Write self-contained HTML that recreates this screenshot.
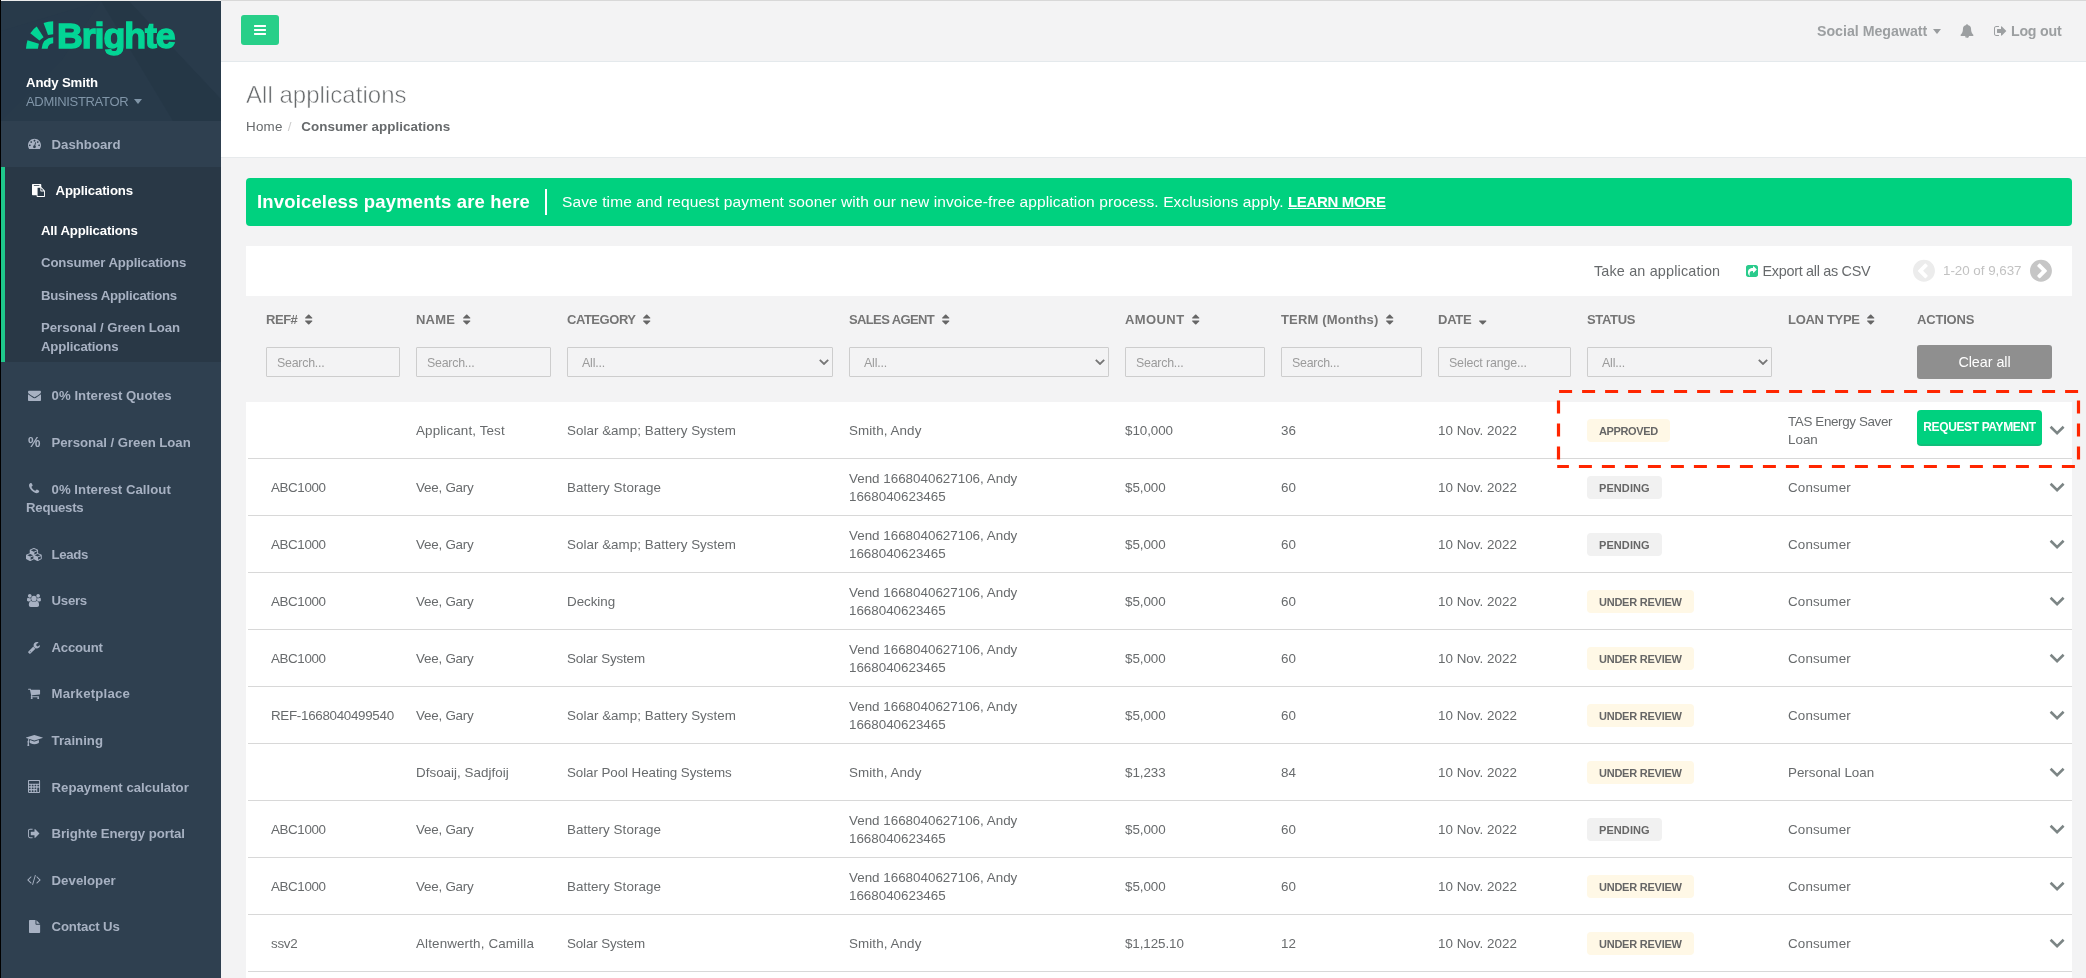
<!DOCTYPE html>
<html lang="en">
<head>
<meta charset="utf-8">
<title>Brighte - All applications</title>
<style>
*{box-sizing:border-box}
html,body{margin:0;padding:0}
body{width:2086px;height:978px;overflow:hidden;position:relative;background:#f3f3f4;will-change:transform;
 font-family:"Liberation Sans",sans-serif;font-size:13.4px;line-height:18.57px;color:#676a6c}
svg.fa{display:inline-block;fill:currentColor;vertical-align:-1.86px;overflow:visible}
svg.sorti{vertical-align:-2.7px}
.fw{display:inline-block;width:16.7px;text-align:center}
.pct{font-size:14px;line-height:14px}
a{color:inherit;text-decoration:none}
/* screenshot frame */
#edge-l{position:absolute;left:0;top:0;width:1px;height:978px;background:#000;z-index:50}
#edge-t{position:absolute;left:1px;top:0;width:2085px;height:1px;background:#d8d8d8;z-index:50}
#edge-t i{display:block;width:220px;height:1px;background:#ececec}
/* sidebar */
#sidebar{position:absolute;left:1px;top:1px;width:220px;height:977px;background:#2f4050;color:#a7b1c2;overflow:hidden}
#sidebar .hdr{height:119.5px;background:#283a4a;position:relative;overflow:hidden}
#sidebar .hdr .pat{position:absolute;left:0;top:0;width:220px;height:120px}
.logo{position:absolute;left:25px;top:20px;height:40px;white-space:nowrap;color:#03d595}
.logo svg{position:absolute;left:0;top:0;width:28px;height:28px}
.logo b{position:absolute;left:31px;top:-7.3px;font-size:35.8px;line-height:44px;letter-spacing:-1.1px;font-weight:700;-webkit-text-stroke:1.4px #03d595}
.uname{position:absolute;left:25px;top:73px;color:#fff;font-weight:700;font-size:13.2px}
.urole{position:absolute;left:25px;top:91.5px;color:#8095a8;font-size:13px}
.urole .car{display:inline-block;margin-left:6px;border-left:4px solid transparent;border-right:4px solid transparent;border-top:5px solid #8095a8;vertical-align:2px}
ul{list-style:none;margin:0;padding:0}
.nav>li>a{display:block;padding:15px 20px 13px 25px;font-weight:700;font-size:13.2px;min-height:46.57px}
.nav>li>a .fw{margin-right:5.2px}
.nav>li.active{background:#293846;border-left:4px solid #1fc98c;color:#fff}
.nav>li.active>a{color:#fff}
.nav2>li>a{display:block;padding:8px 10px 6px 36px;font-weight:700;font-size:13.2px;color:#a7b1c2}
.nav2>li.cur>a{color:#fff}
.nav2>li:last-child{margin-bottom:10px}
/* top nav */
#topnav{position:absolute;left:221px;top:1px;width:1865px;height:61px;border-bottom:1px solid #e4e9ec;background:#f3f3f4}
.burger{position:absolute;left:20px;top:14px;width:38px;height:30px;border-radius:3px;background:#28cf89;color:#fff;text-align:center;line-height:30px}
.burger svg{vertical-align:-3px}
.tr{position:absolute;top:0;height:60px;line-height:60px;font-size:14.2px;font-weight:700;color:#9c9fa1;white-space:nowrap}
.tr .car{display:inline-block;margin-left:6px;border-left:4px solid transparent;border-right:4px solid transparent;border-top:5px solid #999c9e;vertical-align:2px}
/* heading */
#heading{position:absolute;left:221px;top:62px;width:1865px;height:96px;background:#fff;border-bottom:1px solid #e7eaec}
#heading h2{position:absolute;left:25px;top:17px;margin:0;font-size:24px;line-height:32px;font-weight:400;color:#676a6c;-webkit-text-stroke:.55px #fff;white-space:nowrap}
.crumb{position:absolute;left:25px;top:56px;white-space:nowrap}
.crumb .sep{color:#ccc;padding:0 6px 0 5px}
.crumb b{font-weight:700}
/* banner */
#banner{position:absolute;left:246px;top:178px;width:1826px;height:48px;border-radius:4px;background:#00d17f;color:#fff;white-space:nowrap}
#banner .h{position:absolute;left:11px;top:11px;font-size:18.5px;line-height:25px;font-weight:700}
#banner .div{position:absolute;left:299px;top:11px;width:2px;height:26px;background:#fff}
#banner .t{position:absolute;left:316px;top:13px;font-size:15.5px;line-height:21px}
#banner .t b{text-decoration:underline;font-weight:700;font-size:15px}
/* toolbar */
#toolbar{position:absolute;left:246px;top:246px;width:1826px;height:50px;background:#fff;white-space:nowrap;font-size:14.4px;line-height:50px}
#toolbar>span,#toolbar>a{position:absolute;top:0}
#toolbar .share{color:#2acb8c}#toolbar .sp{position:static;display:inline-block;width:4.5px}
#toolbar .pg{color:#c2c2c2;font-size:13.4px}
#toolbar .circ{position:absolute;top:12px}
#toolbar .circ.l{left:1667px;color:#ececec}
#toolbar .circ.r{left:1784px;color:#c6c6c6}
/* table */
#grid{position:absolute;left:246px;top:296px;width:1826px;border-collapse:separate;border-spacing:0;table-layout:fixed}
#grid th{height:40px;padding:14.6px 16px 0 0;text-align:left;vertical-align:top;font-weight:700;font-size:13px;color:#757575;white-space:nowrap}
#grid th:first-child,#grid td:first-child{padding-left:20px}
#grid tr.f td{height:66px;padding:11px 16px 0 0;vertical-align:top;background:transparent;border:0}
#grid tr.f td:first-child{padding-left:20px}
.sorti{margin-left:7.6px;color:#666}
.inp{display:block;width:100%;height:30px;border:1px solid #cdcdcd;border-radius:1px;padding:1.2px 10px 0;font-size:12.4px;line-height:28px;color:#9b9b9b;position:relative;white-space:nowrap}
.sel{padding-left:14px}
.selarrow{position:absolute;right:3px;top:11px;width:10px;height:6px}
.btn-clear{display:block;width:135px;height:34px;margin-top:-2px;border:0;border-radius:3px;background:#8f8f8f;color:#fff;font:400 14.4px/34px "Liberation Sans",sans-serif;text-align:center;padding:0}
#grid tbody td{height:57px;padding:2px 16px 0 0;background:#fff;border-bottom:1px solid #d8d8d8;vertical-align:middle;line-height:17.6px;color:#686b6d}
#grid tbody td.c-ref{padding-left:25px}
#grid tbody tr td:first-child{border-bottom-color:transparent;background:linear-gradient(#d8d8d8,#d8d8d8) no-repeat 2px 100%/100% 1px #fff;background-origin:border-box;background-clip:border-box}
.pill{display:inline-block;height:23px;line-height:23px;padding:0 12px;border-radius:4px;font-size:11px;font-weight:700;color:#666;position:relative;top:-1px;padding-top:1.4px}
.pill.approved,.pill.review{background:#fff8e6}
.pill.pending{background:#f1f1f1}
.c-act{position:relative}
.btn-req{position:absolute;left:0;top:8px;width:125px;height:36px;border:0;border-bottom:2px solid #0fbf7a;border-radius:4px;background:#00d17f;color:#fff;font:700 12px/34px "Liberation Sans",sans-serif;padding:0;text-align:center;white-space:nowrap}
.rowchev{position:absolute;left:132px;top:23px;width:16px;height:11px}
#anno{position:absolute;left:0;top:0;width:2086px;height:978px;z-index:40;pointer-events:none}
</style>
</head>
<body>
<div id="edge-l"></div><div id="edge-t"><i></i></div>

<nav id="sidebar">
 <div class="hdr">
  <svg class="pat" viewBox="0 0 220 120" aria-hidden="true"><polygon points="100,0 128,0 220,98 220,120 172,120" fill="#253746"/><polygon points="128,0 220,0 220,98" fill="#293b4b"/><polygon points="0,30 100,0 60,60 0,120" fill="#27394a"/></svg>
  <div class="logo">
   <svg viewBox="0 0 28 28" aria-hidden="true"><g fill="#03d595">
    <path d="M27.2 0.2 L27.2 13.2 L22 13.9 L17.6 1.9 Q22 0.4 27.2 0.2Z"/>
    <path d="M10.7 5.6 L17.6 16.2 L13.4 19.6 L4.3 12.2 Q7 8.2 10.7 5.6Z"/>
    <path d="M1.5 19.2 L12.9 22.8 L11.9 27.8 L0 27.8 Q0.2 23 1.5 19.2Z"/>
    <path d="M27.2 16.2 L27.2 22.2 Q22.2 22.6 21.6 27.8 L15.6 27.8 Q16.4 17 27.2 16.2Z"/>
   </g></svg>
   <b>Brighte</b>
  </div>
  <div class="uname"><span style="letter-spacing:-0.14px">Andy Smith</span></div>
  <div class="urole"><span style="letter-spacing:-0.32px">ADMINISTRATOR</span><i class="car"></i></div>
 </div>
 <ul class="nav">
  <li><a><span class="fw"><svg class="fa " style="width:13.00px;height:13px;" viewBox="0 -1536 1792 1792" aria-hidden="true"><path transform="scale(1,-1)" d="M384 384C384 313 327 256 256 256C185 256 128 313 128 384C128 455 185 512 256 512C327 512 384 455 384 384ZM576 832C576 761 519 704 448 704C377 704 320 761 320 832C320 903 377 960 448 960C519 960 576 903 576 832ZM1004 351C1069 306 1103 224 1082 143C1055 41 950 -21 847 6C745 33 683 138 710 241C732 322 801 377 880 383L981 765C990 799 1025 820 1059 811C1093 802 1113 767 1105 733ZM1664 384C1664 313 1607 256 1536 256C1465 256 1408 313 1408 384C1408 455 1465 512 1536 512C1607 512 1664 455 1664 384ZM1024 1024C1024 953 967 896 896 896C825 896 768 953 768 1024C768 1095 825 1152 896 1152C967 1152 1024 1095 1024 1024ZM1472 832C1472 761 1415 704 1344 704C1273 704 1216 761 1216 832C1216 903 1273 960 1344 960C1415 960 1472 903 1472 832ZM1792 384C1792 878 1390 1280 896 1280C402 1280 0 878 0 384C0 212 49 45 141 -99C153 -117 173 -128 195 -128H1597C1619 -128 1639 -117 1651 -99C1743 46 1792 212 1792 384Z"/></svg></span> <span style="letter-spacing:0.01px">Dashboard</span></a></li>
  <li class="active"><a><span class="fw"><svg class="fa " style="width:13.00px;height:13px;" viewBox="0 -1536 1792 1792" aria-hidden="true"><path transform="scale(1,-1)" d="M768 -128V1024H1152V608C1152 555 1195 512 1248 512H1664V-128ZM1024 1312C1024 1295 1009 1280 992 1280H288C271 1280 256 1295 256 1312V1376C256 1393 271 1408 288 1408H992C1009 1408 1024 1393 1024 1376V1312ZM1280 640V939L1579 640ZM1792 512C1792 565 1762 638 1724 676L1316 1084C1305 1095 1293 1104 1280 1112V1440C1280 1493 1237 1536 1184 1536H96C43 1536 0 1493 0 1440V96C0 43 43 0 96 0H640V-160C640 -213 683 -256 736 -256H1696C1749 -256 1792 -213 1792 -160Z"/></svg></span> <span style="letter-spacing:-0.15px">Applications</span></a>
   <ul class="nav2">
    <li class="cur"><a><span style="letter-spacing:-0.16px">All Applications</span></a></li>
    <li><a><span style="letter-spacing:-0.11px">Consumer Applications</span></a></li>
    <li><a><span style="letter-spacing:-0.24px">Business Applications</span></a></li>
    <li><a><span style="letter-spacing:-0.04px">Personal / Green Loan</span><br><span style="letter-spacing:-0.15px">Applications</span></a></li>
   </ul>
  </li>
  <li><a><span class="fw"><svg class="fa " style="width:13.00px;height:13px;" viewBox="0 -1536 1792 1792" aria-hidden="true"><path transform="scale(1,-1)" d="M1792 826C1762 793 1728 764 1692 739C1525 626 1357 512 1194 394C1110 332 1006 256 897 256H896H895C786 256 682 332 598 394C435 513 267 626 101 739C64 764 30 793 0 826V32C0 -56 72 -128 160 -128H1632C1720 -128 1792 -56 1792 32ZM1792 1120C1792 1208 1719 1280 1632 1280H160C53 1280 0 1196 0 1098C0 1007 101 894 172 846C327 738 484 630 639 521C704 476 814 384 895 384H896H897C978 384 1088 476 1153 521C1308 630 1465 738 1621 846C1709 907 1792 1008 1792 1120Z"/></svg></span> <span style="letter-spacing:0.04px">0% Interest Quotes</span></a></li>
  <li><a><span class="fw pct">%</span> <span style="letter-spacing:-0.04px">Personal / Green Loan</span></a></li>
  <li><a><span class="fw"><svg class="fa " style="width:10.21px;height:13px;" viewBox="0 -1536 1408 1792" aria-hidden="true"><path transform="scale(1,-1)" d="M1408 296C1408 303 1408 310 1405 317C1398 338 1349 360 1329 370C1272 402 1214 433 1158 466C1132 482 1100 512 1069 512C1008 512 919 331 865 331C838 331 803 356 779 370C597 471 471 597 370 779C356 803 331 838 331 865C331 919 512 1008 512 1069C512 1100 482 1132 466 1158C433 1214 402 1272 370 1329C360 1349 338 1398 317 1405C310 1408 303 1408 296 1408C260 1408 190 1392 157 1377C108 1356 76 1300 51 1255C19 1196 0 1136 0 1069C0 976 38 892 69 807C91 746 118 687 152 632C257 462 462 257 632 152C687 118 746 91 807 69C892 38 976 0 1069 0C1136 0 1196 19 1255 51C1300 76 1356 108 1377 157C1392 190 1408 260 1408 296Z"/></svg></span> <span style="letter-spacing:0.03px">0% Interest Callout</span><br><span style="letter-spacing:-0.24px">Requests</span></a></li>
  <li><a><span class="fw"><svg class="fa " style="width:16.71px;height:13px;" viewBox="0 -1536 2304 1792" aria-hidden="true"><path transform="scale(1,-1)" d="M640 -96V246L1024 410V96ZM576 358 172 531 576 704 980 531ZM1664 -96V246L2048 410V96ZM1600 358 1196 531 1600 704 2004 531ZM1152 651V918L1536 1082V816ZM1088 1030 647 1219 1088 1408 1529 1219ZM2176 512C2176 563 2146 609 2098 630L1664 816V1216C1664 1267 1633 1313 1586 1334L1138 1526C1122 1533 1105 1536 1088 1536C1071 1536 1054 1533 1038 1526L590 1334C543 1313 512 1267 512 1216V816L78 630C31 609 0 563 0 512V96C0 48 27 3 71 -18L519 -242C537 -252 556 -256 576 -256C596 -256 615 -252 633 -242L1081 -18C1084 -17 1086 -16 1088 -14C1090 -16 1092 -17 1095 -18L1543 -242C1561 -252 1580 -256 1600 -256C1620 -256 1639 -252 1657 -242L2105 -18C2149 3 2176 48 2176 96Z"/></svg></span> <span style="letter-spacing:-0.32px">Leads</span></a></li>
  <li><a><span class="fw"><svg class="fa " style="width:13.93px;height:13px;" viewBox="0 -1536 1920 1792" aria-hidden="true"><path transform="scale(1,-1)" d="M593 640C541 715 512 805 512 896C512 918 514 940 517 962C474 947 430 939 384 939C249 939 145 1024 124 1024C-3 1024 0 752 0 671C0 560 94 512 194 512H328C395 592 489 637 593 640ZM1664 3C1664 229 1611 576 1318 576C1284 576 1160 437 960 437C760 437 636 576 602 576C309 576 256 229 256 3C256 -159 363 -256 523 -256H1397C1557 -256 1664 -159 1664 3ZM640 1280C640 1421 525 1536 384 1536C243 1536 128 1421 128 1280C128 1139 243 1024 384 1024C525 1024 640 1139 640 1280ZM1344 896C1344 1108 1172 1280 960 1280C748 1280 576 1108 576 896C576 684 748 512 960 512C1172 512 1344 684 1344 896ZM1920 671C1920 752 1923 1024 1796 1024C1775 1024 1671 939 1536 939C1490 939 1446 947 1403 962C1406 940 1408 918 1408 896C1408 805 1379 715 1327 640C1431 637 1525 592 1592 512H1726C1826 512 1920 560 1920 671ZM1792 1280C1792 1421 1677 1536 1536 1536C1395 1536 1280 1421 1280 1280C1280 1139 1395 1024 1536 1024C1677 1024 1792 1139 1792 1280Z"/></svg></span> <span style="letter-spacing:-0.25px">Users</span></a></li>
  <li><a><span class="fw"><svg class="fa " style="width:12.07px;height:13px;" viewBox="0 -1536 1664 1792" aria-hidden="true"><path transform="scale(1,-1)" d="M384 64C384 29 355 0 320 0C285 0 256 29 256 64C256 99 285 128 320 128C355 128 384 99 384 64ZM1028 484C897 536 792 641 740 772L59 91C35 67 21 34 21 0C21 -34 35 -67 59 -90L165 -198C189 -221 222 -235 256 -235C290 -235 323 -221 346 -198L1028 484ZM1662 919C1662 939 1650 954 1630 954C1610 954 1378 808 1345 789L1152 896V1120L1445 1289C1454 1295 1461 1306 1461 1317C1461 1329 1455 1338 1445 1345C1384 1386 1289 1408 1216 1408C969 1408 768 1207 768 960C768 713 969 512 1216 512C1405 512 1576 635 1639 813C1650 845 1662 886 1662 919Z"/></svg></span> <span style="letter-spacing:-0.23px">Account</span></a></li>
  <li><a><span class="fw"><svg class="fa " style="width:12.07px;height:13px;" viewBox="0 -1536 1664 1792" aria-hidden="true"><path transform="scale(1,-1)" d="M640 0C640 70 582 128 512 128C442 128 384 70 384 0C384 -70 442 -128 512 -128C582 -128 640 -70 640 0ZM1536 0C1536 70 1478 128 1408 128C1338 128 1280 70 1280 0C1280 -70 1338 -128 1408 -128C1478 -128 1536 -70 1536 0ZM1664 1088C1664 1123 1635 1152 1600 1152H399C389 1200 387 1280 320 1280H64C29 1280 0 1251 0 1216C0 1181 29 1152 64 1152H268L445 329C429 298 384 223 384 192C384 157 413 128 448 128H1472C1507 128 1536 157 1536 192C1536 227 1507 256 1472 256H552C562 276 576 297 576 320C576 344 568 367 563 390L1607 512C1639 516 1664 544 1664 576Z"/></svg></span> <span style="letter-spacing:0.20px">Marketplace</span></a></li>
  <li><a><span class="fw"><svg class="fa " style="width:16.71px;height:13px;" viewBox="0 -1536 2304 1792" aria-hidden="true"><path transform="scale(1,-1)" d="M1774 700 1200 519C1184 514 1168 512 1152 512C1136 512 1120 514 1104 519L530 700L512 384C504 243 799 128 1152 128C1505 128 1800 243 1792 384ZM2304 1024C2304 1038 2295 1050 2282 1055L1162 1407C1158 1408 1155 1408 1152 1408C1149 1408 1146 1408 1142 1407L22 1055C9 1050 0 1038 0 1024C0 1010 9 998 22 993L355 889C293 802 263 676 257 559C219 537 192 496 192 448C192 403 215 364 250 341L192 -92C191 -101 194 -110 200 -117C206 -124 215 -128 224 -128H416C425 -128 434 -124 440 -117C446 -110 449 -101 448 -92L390 341C425 364 448 403 448 448C448 495 423 535 385 557C393 692 433 802 490 847L1142 641C1146 640 1149 640 1152 640C1155 640 1158 640 1162 641L2282 993C2295 998 2304 1010 2304 1024Z"/></svg></span> <span style="letter-spacing:0.02px">Training</span></a></li>
  <li><a><span class="fw"><svg class="fa " style="width:13.00px;height:13px;" viewBox="0 -1536 1792 1792" aria-hidden="true"><path transform="scale(1,-1)" d="M384 0C384 -71 327 -128 256 -128C185 -128 128 -71 128 0C128 71 185 128 256 128C327 128 384 71 384 0ZM768 0C768 -71 711 -128 640 -128C569 -128 512 -71 512 0C512 71 569 128 640 128C711 128 768 71 768 0ZM384 384C384 313 327 256 256 256C185 256 128 313 128 384C128 455 185 512 256 512C327 512 384 455 384 384ZM1152 0C1152 -71 1095 -128 1024 -128C953 -128 896 -71 896 0C896 71 953 128 1024 128C1095 128 1152 71 1152 0ZM768 384C768 313 711 256 640 256C569 256 512 313 512 384C512 455 569 512 640 512C711 512 768 455 768 384ZM384 768C384 697 327 640 256 640C185 640 128 697 128 768C128 839 185 896 256 896C327 896 384 839 384 768ZM1152 384C1152 313 1095 256 1024 256C953 256 896 313 896 384C896 455 953 512 1024 512C1095 512 1152 455 1152 384ZM768 768C768 697 711 640 640 640C569 640 512 697 512 768C512 839 569 896 640 896C711 896 768 839 768 768ZM1536 0C1536 -70 1478 -128 1408 -128C1338 -128 1280 -70 1280 0V384C1280 454 1338 512 1408 512C1478 512 1536 454 1536 384V0ZM1152 768C1152 697 1095 640 1024 640C953 640 896 697 896 768C896 839 953 896 1024 896C1095 896 1152 839 1152 768ZM1536 1088C1536 1053 1507 1024 1472 1024H192C157 1024 128 1053 128 1088V1344C128 1379 157 1408 192 1408H1472C1507 1408 1536 1379 1536 1344V1088ZM1536 768C1536 697 1479 640 1408 640C1337 640 1280 697 1280 768C1280 839 1337 896 1408 896C1479 896 1536 839 1536 768ZM1664 1408C1664 1478 1606 1536 1536 1536H128C58 1536 0 1478 0 1408V-128C0 -198 58 -256 128 -256H1536C1606 -256 1664 -198 1664 -128Z"/></svg></span> <span style="letter-spacing:0.01px">Repayment calculator</span></a></li>
  <li><a><span class="fw"><svg class="fa " style="width:12.07px;height:13px;" viewBox="0 -1536 1664 1792" aria-hidden="true"><path transform="scale(1,-1)" d="M640 96C640 133 601 128 576 128H288C200 128 128 200 128 288V992C128 1080 200 1152 288 1152H608C653 1152 640 1220 640 1248C640 1265 625 1280 608 1280H288C129 1280 0 1151 0 992V288C0 129 129 0 288 0H608C653 0 640 68 640 96ZM1568 640C1568 657 1561 673 1549 685L1005 1229C993 1241 977 1248 960 1248C925 1248 896 1219 896 1184V896H448C413 896 384 867 384 832V448C384 413 413 384 448 384H896V96C896 61 925 32 960 32C977 32 993 39 1005 51L1549 595C1561 607 1568 623 1568 640Z"/></svg></span> <span style="letter-spacing:-0.07px">Brighte Energy portal</span></a></li>
  <li><a><span class="fw"><svg class="fa " style="width:13.93px;height:13px;" viewBox="0 -1536 1920 1792" aria-hidden="true"><path transform="scale(1,-1)" d="M617 137C630 150 630 170 617 183L224 576L617 969C630 982 630 1002 617 1015L567 1065C554 1078 534 1078 521 1065L55 599C42 586 42 566 55 553L521 87C534 74 554 74 567 87L617 137ZM1208 1204C1213 1221 1203 1239 1186 1244L1124 1261C1108 1266 1090 1256 1085 1239L712 -52C707 -69 717 -87 734 -92L796 -109C812 -114 830 -104 835 -87L1208 1204ZM1865 553C1878 566 1878 586 1865 599L1399 1065C1386 1078 1366 1078 1353 1065L1303 1015C1290 1002 1290 982 1303 969L1696 576L1303 183C1290 170 1290 150 1303 137L1353 87C1366 74 1386 74 1399 87L1865 553Z"/></svg></span> <span style="letter-spacing:0.05px">Developer</span></a></li>
  <li><a><span class="fw"><svg class="fa " style="width:11.14px;height:13px;" viewBox="0 -1536 1536 1792" aria-hidden="true"><path transform="scale(1,-1)" d="M1024 1024H1496C1487 1038 1478 1050 1468 1060L1060 1468C1050 1478 1038 1487 1024 1496ZM896 992V1536H96C43 1536 0 1493 0 1440V-160C0 -213 43 -256 96 -256H1440C1493 -256 1536 -213 1536 -160V896H992C939 896 896 939 896 992Z"/></svg></span> <span style="letter-spacing:-0.15px">Contact Us</span></a></li>
 </ul>
</nav>

<header id="topnav">
 <a class="burger"><svg class="fa " style="width:12.00px;height:14px;" viewBox="0 -1536 1536 1792" aria-hidden="true"><path transform="scale(1,-1)" d="M1536 192C1536 227 1507 256 1472 256H64C29 256 0 227 0 192V64C0 29 29 0 64 0H1472C1507 0 1536 29 1536 64ZM1536 704C1536 739 1507 768 1472 768H64C29 768 0 739 0 704V576C0 541 29 512 64 512H1472C1507 512 1536 541 1536 576ZM1536 1216C1536 1251 1507 1280 1472 1280H64C29 1280 0 1251 0 1216V1088C0 1053 29 1024 64 1024H1472C1507 1024 1536 1053 1536 1088Z"/></svg></a>
 <span class="tr" style="left:1596px"><span style="letter-spacing:-0.01px">Social Megawatt</span><i class="car"></i></span>
 <span class="tr" style="left:1739px"><svg class="fa " style="width:14.00px;height:14px;" viewBox="0 -1536 1792 1792" aria-hidden="true"><path transform="scale(1,-1)" d="M912 -160C912 -169 905 -176 896 -176C799 -176 720 -97 720 0C720 9 727 16 736 16C745 16 752 9 752 0C752 -79 817 -144 896 -144C905 -144 912 -151 912 -160ZM1728 128C1580 253 1408 477 1408 960C1408 1152 1249 1362 984 1401C989 1413 992 1426 992 1440C992 1493 949 1536 896 1536C843 1536 800 1493 800 1440C800 1426 803 1413 808 1401C543 1362 384 1152 384 960C384 477 212 253 64 128C64 58 122 0 192 0H640C640 -141 755 -256 896 -256C1037 -256 1152 -141 1152 0H1600C1670 0 1728 58 1728 128Z"/></svg></span>
 <span class="tr" style="left:1773px"><svg class="fa " style="width:13.00px;height:14px;" viewBox="0 -1536 1664 1792" aria-hidden="true"><path transform="scale(1,-1)" d="M640 96C640 133 601 128 576 128H288C200 128 128 200 128 288V992C128 1080 200 1152 288 1152H608C653 1152 640 1220 640 1248C640 1265 625 1280 608 1280H288C129 1280 0 1151 0 992V288C0 129 129 0 288 0H608C653 0 640 68 640 96ZM1568 640C1568 657 1561 673 1549 685L1005 1229C993 1241 977 1248 960 1248C925 1248 896 1219 896 1184V896H448C413 896 384 867 384 832V448C384 413 413 384 448 384H896V96C896 61 925 32 960 32C977 32 993 39 1005 51L1549 595C1561 607 1568 623 1568 640Z"/></svg> <span style="letter-spacing:-0.21px">Log out</span></span>
</header>

<section id="heading">
 <h2><span style="letter-spacing:0.03px">All applications</span></h2>
 <div class="crumb"><a><span style="letter-spacing:0.25px">Home</span></a><span class="sep">/</span> <b><span style="letter-spacing:0.05px">Consumer applications</span></b></div>
</section>

<div id="banner">
 <span class="h"><span style="letter-spacing:0.16px">Invoiceless payments are here</span></span><i class="div"></i>
 <span class="t"><span style="letter-spacing:0.11px">Save time and request payment sooner with our new invoice-free application process. Exclusions apply.</span> <b><span style="letter-spacing:-0.32px">LEARN MORE</span></b></span>
</div>

<div id="toolbar">
 <a style="left:1348px"><span style="letter-spacing:0.16px">Take an application</span></a>
 <a style="left:1500px"><svg class="fa share" style="width:12.00px;height:14px;" viewBox="0 -1536 1536 1792" aria-hidden="true"><path transform="scale(1,-1)" d="M1005 435C993 423 977 416 960 416C952 416 943 418 936 421C912 431 896 454 896 480V640C709 640 603 610 542 541C469 459 450 309 480 68C482 54 474 40 461 35C457 33 452 32 448 32C439 32 430 36 423 44C417 52 256 247 256 448C256 695 322 1024 896 1024V1184C896 1210 912 1233 936 1243C959 1253 987 1248 1005 1229L1357 877C1382 852 1382 812 1357 787ZM1536 1120C1536 1279 1407 1408 1248 1408H288C129 1408 0 1279 0 1120V160C0 1 129 -128 288 -128H1248C1407 -128 1536 1 1536 160Z"/></svg><span class="sp"></span><span style="letter-spacing:-0.29px">Export all as CSV</span></a>
 <svg class="fa circ l" style="width:21.94px;height:25.6px;" viewBox="0 -1536 1536 1792" aria-hidden="true"><path transform="scale(1,-1)" d="M909 141C884 116 844 116 819 141L365 595C340 620 340 660 365 685L819 1139C844 1164 884 1164 909 1139L1011 1037C1036 1012 1036 972 1011 947L704 640L1011 333C1036 308 1036 268 1011 243ZM1536 640C1536 1064 1192 1408 768 1408C344 1408 0 1064 0 640C0 216 344 -128 768 -128C1192 -128 1536 216 1536 640Z"/></svg><span class="pg" style="left:1697px"><span style="letter-spacing:-0.03px">1-20 of 9,637</span></span><svg class="fa circ r" style="width:21.94px;height:25.6px;" viewBox="0 -1536 1536 1792" aria-hidden="true"><path transform="scale(1,-1)" d="M717 141C692 116 652 116 627 141L525 243C500 268 500 308 525 333L832 640L525 947C500 972 500 1012 525 1037L627 1139C652 1164 692 1164 717 1139L1171 685C1196 660 1196 620 1171 595ZM1536 640C1536 1064 1192 1408 768 1408C344 1408 0 1064 0 640C0 216 344 -128 768 -128C1192 -128 1536 216 1536 640Z"/></svg>
</div>

<table id="grid">
 <colgroup><col style="width:170px"><col style="width:151px"><col style="width:282px"><col style="width:276px"><col style="width:156px"><col style="width:157px"><col style="width:149px"><col style="width:201px"><col style="width:129px"><col style="width:155px"></colgroup>
 <thead>
  <tr class="h"><th><span style="letter-spacing:-0.46px">REF#</span><svg class="fa sorti" style="width:7.43px;height:13px;" viewBox="0 -1536 1024 1792" aria-hidden="true"><path transform="scale(1,-1)" d="M1024 448C1024 483 995 512 960 512H64C29 512 0 483 0 448C0 431 7 415 19 403L467 -45C479 -57 495 -64 512 -64C529 -64 545 -57 557 -45L1005 403C1017 415 1024 431 1024 448ZM1024 832C1024 849 1017 865 1005 877L557 1325C545 1337 529 1344 512 1344C495 1344 479 1337 467 1325L19 877C7 865 0 849 0 832C0 797 29 768 64 768H960C995 768 1024 797 1024 832Z"/></svg></th><th><span style="letter-spacing:0.20px">NAME</span><svg class="fa sorti" style="width:7.43px;height:13px;" viewBox="0 -1536 1024 1792" aria-hidden="true"><path transform="scale(1,-1)" d="M1024 448C1024 483 995 512 960 512H64C29 512 0 483 0 448C0 431 7 415 19 403L467 -45C479 -57 495 -64 512 -64C529 -64 545 -57 557 -45L1005 403C1017 415 1024 431 1024 448ZM1024 832C1024 849 1017 865 1005 877L557 1325C545 1337 529 1344 512 1344C495 1344 479 1337 467 1325L19 877C7 865 0 849 0 832C0 797 29 768 64 768H960C995 768 1024 797 1024 832Z"/></svg></th><th><span style="letter-spacing:-0.46px">CATEGORY</span><svg class="fa sorti" style="width:7.43px;height:13px;" viewBox="0 -1536 1024 1792" aria-hidden="true"><path transform="scale(1,-1)" d="M1024 448C1024 483 995 512 960 512H64C29 512 0 483 0 448C0 431 7 415 19 403L467 -45C479 -57 495 -64 512 -64C529 -64 545 -57 557 -45L1005 403C1017 415 1024 431 1024 448ZM1024 832C1024 849 1017 865 1005 877L557 1325C545 1337 529 1344 512 1344C495 1344 479 1337 467 1325L19 877C7 865 0 849 0 832C0 797 29 768 64 768H960C995 768 1024 797 1024 832Z"/></svg></th><th><span style="letter-spacing:-0.63px">SALES AGENT</span><svg class="fa sorti" style="width:7.43px;height:13px;" viewBox="0 -1536 1024 1792" aria-hidden="true"><path transform="scale(1,-1)" d="M1024 448C1024 483 995 512 960 512H64C29 512 0 483 0 448C0 431 7 415 19 403L467 -45C479 -57 495 -64 512 -64C529 -64 545 -57 557 -45L1005 403C1017 415 1024 431 1024 448ZM1024 832C1024 849 1017 865 1005 877L557 1325C545 1337 529 1344 512 1344C495 1344 479 1337 467 1325L19 877C7 865 0 849 0 832C0 797 29 768 64 768H960C995 768 1024 797 1024 832Z"/></svg></th><th><span style="letter-spacing:0.41px">AMOUNT</span><svg class="fa sorti" style="width:7.43px;height:13px;" viewBox="0 -1536 1024 1792" aria-hidden="true"><path transform="scale(1,-1)" d="M1024 448C1024 483 995 512 960 512H64C29 512 0 483 0 448C0 431 7 415 19 403L467 -45C479 -57 495 -64 512 -64C529 -64 545 -57 557 -45L1005 403C1017 415 1024 431 1024 448ZM1024 832C1024 849 1017 865 1005 877L557 1325C545 1337 529 1344 512 1344C495 1344 479 1337 467 1325L19 877C7 865 0 849 0 832C0 797 29 768 64 768H960C995 768 1024 797 1024 832Z"/></svg></th><th><span style="letter-spacing:0.16px">TERM (Months)</span><svg class="fa sorti" style="width:7.43px;height:13px;" viewBox="0 -1536 1024 1792" aria-hidden="true"><path transform="scale(1,-1)" d="M1024 448C1024 483 995 512 960 512H64C29 512 0 483 0 448C0 431 7 415 19 403L467 -45C479 -57 495 -64 512 -64C529 -64 545 -57 557 -45L1005 403C1017 415 1024 431 1024 448ZM1024 832C1024 849 1017 865 1005 877L557 1325C545 1337 529 1344 512 1344C495 1344 479 1337 467 1325L19 877C7 865 0 849 0 832C0 797 29 768 64 768H960C995 768 1024 797 1024 832Z"/></svg></th><th><span style="letter-spacing:-0.26px">DATE</span><svg class="fa sorti" style="width:7.43px;height:13px;" viewBox="0 -1536 1024 1792" aria-hidden="true"><path transform="scale(1,-1)" d="M1024 448C1024 483 995 512 960 512H64C29 512 0 483 0 448C0 431 7 415 19 403L467 -45C479 -57 495 -64 512 -64C529 -64 545 -57 557 -45L1005 403C1017 415 1024 431 1024 448Z"/></svg></th><th><span style="letter-spacing:-0.32px">STATUS</span></th><th><span style="letter-spacing:-0.30px">LOAN TYPE</span><svg class="fa sorti" style="width:7.43px;height:13px;" viewBox="0 -1536 1024 1792" aria-hidden="true"><path transform="scale(1,-1)" d="M1024 448C1024 483 995 512 960 512H64C29 512 0 483 0 448C0 431 7 415 19 403L467 -45C479 -57 495 -64 512 -64C529 -64 545 -57 557 -45L1005 403C1017 415 1024 431 1024 448ZM1024 832C1024 849 1017 865 1005 877L557 1325C545 1337 529 1344 512 1344C495 1344 479 1337 467 1325L19 877C7 865 0 849 0 832C0 797 29 768 64 768H960C995 768 1024 797 1024 832Z"/></svg></th><th><span style="letter-spacing:-0.19px">ACTIONS</span></th></tr>
  <tr class="f"><td><div class="inp"><span style="letter-spacing:-0.24px">Search...</span></div></td><td><div class="inp"><span style="letter-spacing:-0.24px">Search...</span></div></td><td><div class="inp sel"><span style="letter-spacing:-0.17px">All...</span><svg class="selarrow" viewBox="0 0 10 6" aria-hidden="true"><path d="M0.8 0.8 L5 5 L9.2 0.8" fill="none" stroke="#767676" stroke-width="1.8"/></svg></div></td><td><div class="inp sel"><span style="letter-spacing:-0.17px">All...</span><svg class="selarrow" viewBox="0 0 10 6" aria-hidden="true"><path d="M0.8 0.8 L5 5 L9.2 0.8" fill="none" stroke="#767676" stroke-width="1.8"/></svg></div></td><td><div class="inp"><span style="letter-spacing:-0.24px">Search...</span></div></td><td><div class="inp"><span style="letter-spacing:-0.24px">Search...</span></div></td><td><div class="inp"><span style="letter-spacing:-0.14px">Select range...</span></div></td><td><div class="inp sel"><span style="letter-spacing:-0.17px">All...</span><svg class="selarrow" viewBox="0 0 10 6" aria-hidden="true"><path d="M0.8 0.8 L5 5 L9.2 0.8" fill="none" stroke="#767676" stroke-width="1.8"/></svg></div></td><td></td><td><button class="btn-clear"><span style="letter-spacing:-0.07px">Clear all</span></button></td></tr>
 </thead>
 <tbody>
<tr>
<td class="c-ref"></td><td><span style="letter-spacing:0.13px">Applicant, Test</span></td><td><span style="letter-spacing:0.03px">Solar &amp;amp; Battery System</span></td><td><span style="letter-spacing:0.09px">Smith, Andy</span></td><td><span style="letter-spacing:-0.06px">$10,000</span></td><td><span style="letter-spacing:-0.02px">36</span></td><td><span style="letter-spacing:0.02px">10 Nov. 2022</span></td>
<td><span class="pill approved"><span style="letter-spacing:-0.36px">APPROVED</span></span></td><td><span style="letter-spacing:-0.36px">TAS Energy Saver</span><br><span style="letter-spacing:0.00px">Loan</span></td><td class="c-act"><button class="btn-req"><span style="letter-spacing:-0.38px">REQUEST PAYMENT</span></button><svg class="rowchev" viewBox="0 0 16 11" aria-hidden="true"><path d="M1.6 1.8 L8.1 8.2 L14.6 1.8" fill="none" stroke="#7c8585" stroke-width="2.6"/></svg></td>
</tr>
<tr>
<td class="c-ref"><span style="letter-spacing:-0.40px">ABC1000</span></td><td><span style="letter-spacing:-0.22px">Vee, Gary</span></td><td><span style="letter-spacing:0.06px">Battery Storage</span></td><td><span style="letter-spacing:0.00px">Vend 1668040627106, Andy</span><br><span style="letter-spacing:-0.01px">1668040623465</span></td><td><span style="letter-spacing:-0.07px">$5,000</span></td><td><span style="letter-spacing:-0.02px">60</span></td><td><span style="letter-spacing:0.02px">10 Nov. 2022</span></td>
<td><span class="pill pending"><span style="letter-spacing:0.08px">PENDING</span></span></td><td><span style="letter-spacing:0.13px">Consumer</span></td><td class="c-act"><svg class="rowchev" viewBox="0 0 16 11" aria-hidden="true"><path d="M1.6 1.8 L8.1 8.2 L14.6 1.8" fill="none" stroke="#7c8585" stroke-width="2.6"/></svg></td>
</tr>
<tr>
<td class="c-ref"><span style="letter-spacing:-0.40px">ABC1000</span></td><td><span style="letter-spacing:-0.22px">Vee, Gary</span></td><td><span style="letter-spacing:0.03px">Solar &amp;amp; Battery System</span></td><td><span style="letter-spacing:0.00px">Vend 1668040627106, Andy</span><br><span style="letter-spacing:-0.01px">1668040623465</span></td><td><span style="letter-spacing:-0.07px">$5,000</span></td><td><span style="letter-spacing:-0.02px">60</span></td><td><span style="letter-spacing:0.02px">10 Nov. 2022</span></td>
<td><span class="pill pending"><span style="letter-spacing:0.08px">PENDING</span></span></td><td><span style="letter-spacing:0.13px">Consumer</span></td><td class="c-act"><svg class="rowchev" viewBox="0 0 16 11" aria-hidden="true"><path d="M1.6 1.8 L8.1 8.2 L14.6 1.8" fill="none" stroke="#7c8585" stroke-width="2.6"/></svg></td>
</tr>
<tr>
<td class="c-ref"><span style="letter-spacing:-0.40px">ABC1000</span></td><td><span style="letter-spacing:-0.22px">Vee, Gary</span></td><td><span style="letter-spacing:-0.04px">Decking</span></td><td><span style="letter-spacing:0.00px">Vend 1668040627106, Andy</span><br><span style="letter-spacing:-0.01px">1668040623465</span></td><td><span style="letter-spacing:-0.07px">$5,000</span></td><td><span style="letter-spacing:-0.02px">60</span></td><td><span style="letter-spacing:0.02px">10 Nov. 2022</span></td>
<td><span class="pill review"><span style="letter-spacing:-0.24px">UNDER REVIEW</span></span></td><td><span style="letter-spacing:0.13px">Consumer</span></td><td class="c-act"><svg class="rowchev" viewBox="0 0 16 11" aria-hidden="true"><path d="M1.6 1.8 L8.1 8.2 L14.6 1.8" fill="none" stroke="#7c8585" stroke-width="2.6"/></svg></td>
</tr>
<tr>
<td class="c-ref"><span style="letter-spacing:-0.40px">ABC1000</span></td><td><span style="letter-spacing:-0.22px">Vee, Gary</span></td><td><span style="letter-spacing:-0.14px">Solar System</span></td><td><span style="letter-spacing:0.00px">Vend 1668040627106, Andy</span><br><span style="letter-spacing:-0.01px">1668040623465</span></td><td><span style="letter-spacing:-0.07px">$5,000</span></td><td><span style="letter-spacing:-0.02px">60</span></td><td><span style="letter-spacing:0.02px">10 Nov. 2022</span></td>
<td><span class="pill review"><span style="letter-spacing:-0.24px">UNDER REVIEW</span></span></td><td><span style="letter-spacing:0.13px">Consumer</span></td><td class="c-act"><svg class="rowchev" viewBox="0 0 16 11" aria-hidden="true"><path d="M1.6 1.8 L8.1 8.2 L14.6 1.8" fill="none" stroke="#7c8585" stroke-width="2.6"/></svg></td>
</tr>
<tr>
<td class="c-ref"><span style="letter-spacing:-0.31px">REF-1668040499540</span></td><td><span style="letter-spacing:-0.22px">Vee, Gary</span></td><td><span style="letter-spacing:0.03px">Solar &amp;amp; Battery System</span></td><td><span style="letter-spacing:0.00px">Vend 1668040627106, Andy</span><br><span style="letter-spacing:-0.01px">1668040623465</span></td><td><span style="letter-spacing:-0.07px">$5,000</span></td><td><span style="letter-spacing:-0.02px">60</span></td><td><span style="letter-spacing:0.02px">10 Nov. 2022</span></td>
<td><span class="pill review"><span style="letter-spacing:-0.24px">UNDER REVIEW</span></span></td><td><span style="letter-spacing:0.13px">Consumer</span></td><td class="c-act"><svg class="rowchev" viewBox="0 0 16 11" aria-hidden="true"><path d="M1.6 1.8 L8.1 8.2 L14.6 1.8" fill="none" stroke="#7c8585" stroke-width="2.6"/></svg></td>
</tr>
<tr>
<td class="c-ref"></td><td><span style="letter-spacing:0.02px">Dfsoaij, Sadjfoij</span></td><td><span style="letter-spacing:-0.08px">Solar Pool Heating Systems</span></td><td><span style="letter-spacing:0.09px">Smith, Andy</span></td><td><span style="letter-spacing:-0.07px">$1,233</span></td><td><span style="letter-spacing:-0.02px">84</span></td><td><span style="letter-spacing:0.02px">10 Nov. 2022</span></td>
<td><span class="pill review"><span style="letter-spacing:-0.24px">UNDER REVIEW</span></span></td><td><span style="letter-spacing:-0.02px">Personal Loan</span></td><td class="c-act"><svg class="rowchev" viewBox="0 0 16 11" aria-hidden="true"><path d="M1.6 1.8 L8.1 8.2 L14.6 1.8" fill="none" stroke="#7c8585" stroke-width="2.6"/></svg></td>
</tr>
<tr>
<td class="c-ref"><span style="letter-spacing:-0.40px">ABC1000</span></td><td><span style="letter-spacing:-0.22px">Vee, Gary</span></td><td><span style="letter-spacing:0.06px">Battery Storage</span></td><td><span style="letter-spacing:0.00px">Vend 1668040627106, Andy</span><br><span style="letter-spacing:-0.01px">1668040623465</span></td><td><span style="letter-spacing:-0.07px">$5,000</span></td><td><span style="letter-spacing:-0.02px">60</span></td><td><span style="letter-spacing:0.02px">10 Nov. 2022</span></td>
<td><span class="pill pending"><span style="letter-spacing:0.08px">PENDING</span></span></td><td><span style="letter-spacing:0.13px">Consumer</span></td><td class="c-act"><svg class="rowchev" viewBox="0 0 16 11" aria-hidden="true"><path d="M1.6 1.8 L8.1 8.2 L14.6 1.8" fill="none" stroke="#7c8585" stroke-width="2.6"/></svg></td>
</tr>
<tr>
<td class="c-ref"><span style="letter-spacing:-0.40px">ABC1000</span></td><td><span style="letter-spacing:-0.22px">Vee, Gary</span></td><td><span style="letter-spacing:0.06px">Battery Storage</span></td><td><span style="letter-spacing:0.00px">Vend 1668040627106, Andy</span><br><span style="letter-spacing:-0.01px">1668040623465</span></td><td><span style="letter-spacing:-0.07px">$5,000</span></td><td><span style="letter-spacing:-0.02px">60</span></td><td><span style="letter-spacing:0.02px">10 Nov. 2022</span></td>
<td><span class="pill review"><span style="letter-spacing:-0.24px">UNDER REVIEW</span></span></td><td><span style="letter-spacing:0.13px">Consumer</span></td><td class="c-act"><svg class="rowchev" viewBox="0 0 16 11" aria-hidden="true"><path d="M1.6 1.8 L8.1 8.2 L14.6 1.8" fill="none" stroke="#7c8585" stroke-width="2.6"/></svg></td>
</tr>
<tr>
<td class="c-ref"><span style="letter-spacing:-0.30px">ssv2</span></td><td><span style="letter-spacing:0.14px">Altenwerth, Camilla</span></td><td><span style="letter-spacing:-0.14px">Solar System</span></td><td><span style="letter-spacing:0.09px">Smith, Andy</span></td><td><span style="letter-spacing:-0.09px">$1,125.10</span></td><td><span style="letter-spacing:-0.02px">12</span></td><td><span style="letter-spacing:0.02px">10 Nov. 2022</span></td>
<td><span class="pill review"><span style="letter-spacing:-0.24px">UNDER REVIEW</span></span></td><td><span style="letter-spacing:0.13px">Consumer</span></td><td class="c-act"><svg class="rowchev" viewBox="0 0 16 11" aria-hidden="true"><path d="M1.6 1.8 L8.1 8.2 L14.6 1.8" fill="none" stroke="#7c8585" stroke-width="2.6"/></svg></td>
</tr>
<tr>
<td class="c-ref"><span style="letter-spacing:-0.40px">ABC1000</span></td><td><span style="letter-spacing:-0.22px">Vee, Gary</span></td><td><span style="letter-spacing:0.06px">Battery Storage</span></td><td><span style="letter-spacing:0.00px">Vend 1668040627106, Andy</span><br><span style="letter-spacing:-0.01px">1668040623465</span></td><td><span style="letter-spacing:-0.07px">$5,000</span></td><td><span style="letter-spacing:-0.02px">60</span></td><td><span style="letter-spacing:0.02px">10 Nov. 2022</span></td>
<td><span class="pill review"><span style="letter-spacing:-0.24px">UNDER REVIEW</span></span></td><td><span style="letter-spacing:0.13px">Consumer</span></td><td class="c-act"><svg class="rowchev" viewBox="0 0 16 11" aria-hidden="true"><path d="M1.6 1.8 L8.1 8.2 L14.6 1.8" fill="none" stroke="#7c8585" stroke-width="2.6"/></svg></td>
</tr>
 </tbody>
</table>

<svg id="anno" viewBox="0 0 2086 978" aria-hidden="true">
 <g stroke="#ff2600" stroke-width="3.2" fill="none" stroke-dasharray="13 10">
  <path d="M1559.1 391.5H2078.5"/>
  <path d="M2078.5 391.5V466.5" stroke-dashoffset="14"/>
  <path d="M1558.5 391.5V466.5" stroke-dashoffset="14"/>
  <path d="M2077.9 466.5H1557.2" stroke-dashoffset="20"/>
 </g>
</svg>
</body>
</html>
